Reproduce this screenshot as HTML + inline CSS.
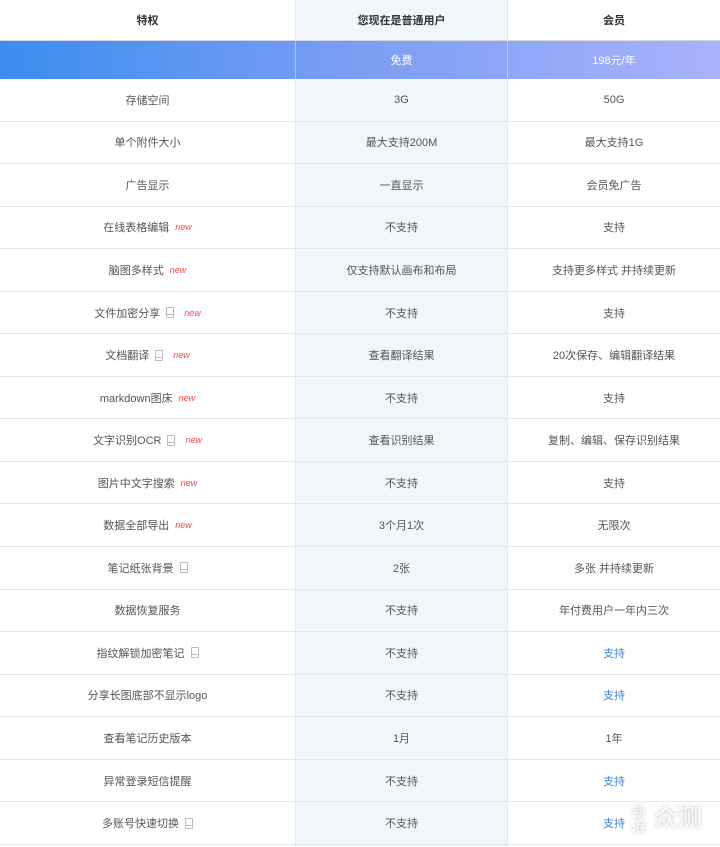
<!DOCTYPE html>
<html><head><meta charset="utf-8"><style>
*{margin:0;padding:0;box-sizing:border-box}
body{width:720px;height:847px;background:#fff;font-family:"Liberation Sans","Noto Sans CJK SC",sans-serif;font-size:11px;color:#555;position:relative;overflow:hidden}
.midbg{position:absolute;left:295px;top:0;width:213px;height:847px;background:#f1f6fb;border-left:1px solid #e3e6ea;border-right:1px solid #e3e6ea}
.row{position:absolute;left:0;width:720px;display:flex;align-items:center;border-bottom:1px solid #e6e6e6}
.c{display:flex;align-items:center;justify-content:center;height:100%}
.c1{width:295px}.c2{width:213px}.c3{width:212px}
.hd{font-weight:bold;color:#333}
.price{background:linear-gradient(90deg,#3b8def,#7c9ef3 50%,#a9b2fd);color:#fff;border-bottom:none}
.price .c2{border-left:1px solid rgba(255,255,255,.4);border-right:1px solid rgba(255,255,255,.4)}
.new{color:#f04848;font-style:italic;font-size:9px;margin-left:6px}
.ph{display:inline-block;width:8px;height:11px;border:1px solid #bbb;border-radius:1px;margin-left:6px;position:relative}
.ph:after{content:"";position:absolute;left:0;right:0;bottom:2px;border-top:1px solid #bbb}
.blue{color:#3d7fe0}
.wm{position:absolute;left:632px;top:798px;color:rgba(255,255,255,.85);font-size:24px;text-shadow:0 0 4px rgba(0,0,0,.3)}
</style></head><body>
<div class="midbg"></div>
<div class="row" style="top:0;height:41px;border-bottom:1px solid #d5d9de"><div class="c c1 hd">特权</div><div class="c c2 hd">您现在是普通用户</div><div class="c c3 hd">会员</div></div>
<div class="row price" style="top:41px;height:38px"><div class="c c1"></div><div class="c c2">免费</div><div class="c c3">198元/年</div></div>
<div class="row" style="top:79px;height:42.55px"><div class="c c1">存储空间</div><div class="c c2">3G</div><div class="c c3">50G</div></div>
<div class="row" style="top:121.55px;height:42.55px"><div class="c c1">单个附件大小</div><div class="c c2">最大支持200M</div><div class="c c3">最大支持1G</div></div>
<div class="row" style="top:164.1px;height:42.55px"><div class="c c1">广告显示</div><div class="c c2">一直显示</div><div class="c c3">会员免广告</div></div>
<div class="row" style="top:206.65px;height:42.55px"><div class="c c1">在线表格编辑<span class="new">new</span></div><div class="c c2">不支持</div><div class="c c3">支持</div></div>
<div class="row" style="top:249.2px;height:42.55px"><div class="c c1">脑图多样式<span class="new">new</span></div><div class="c c2">仅支持默认画布和布局</div><div class="c c3">支持更多样式 并持续更新</div></div>
<div class="row" style="top:291.75px;height:42.55px"><div class="c c1">文件加密分享<span class="ph"></span><span class="new" style="margin-left:10px">new</span></div><div class="c c2">不支持</div><div class="c c3">支持</div></div>
<div class="row" style="top:334.3px;height:42.55px"><div class="c c1">文档翻译<span class="ph"></span><span class="new" style="margin-left:10px">new</span></div><div class="c c2">查看翻译结果</div><div class="c c3">20次保存、编辑翻译结果</div></div>
<div class="row" style="top:376.85px;height:42.55px"><div class="c c1">markdown图床<span class="new">new</span></div><div class="c c2">不支持</div><div class="c c3">支持</div></div>
<div class="row" style="top:419.4px;height:42.55px"><div class="c c1">文字识别OCR<span class="ph"></span><span class="new" style="margin-left:10px">new</span></div><div class="c c2">查看识别结果</div><div class="c c3">复制、编辑、保存识别结果</div></div>
<div class="row" style="top:461.95px;height:42.55px"><div class="c c1">图片中文字搜索<span class="new">new</span></div><div class="c c2">不支持</div><div class="c c3">支持</div></div>
<div class="row" style="top:504.5px;height:42.55px"><div class="c c1">数据全部导出<span class="new">new</span></div><div class="c c2">3个月1次</div><div class="c c3">无限次</div></div>
<div class="row" style="top:547.05px;height:42.55px"><div class="c c1">笔记纸张背景<span class="ph"></span></div><div class="c c2">2张</div><div class="c c3">多张 并持续更新</div></div>
<div class="row" style="top:589.6px;height:42.55px"><div class="c c1">数据恢复服务</div><div class="c c2">不支持</div><div class="c c3">年付费用户一年内三次</div></div>
<div class="row" style="top:632.15px;height:42.55px"><div class="c c1">指纹解锁加密笔记<span class="ph"></span></div><div class="c c2">不支持</div><div class="c c3 blue">支持</div></div>
<div class="row" style="top:674.7px;height:42.55px"><div class="c c1">分享长图底部不显示logo</div><div class="c c2">不支持</div><div class="c c3 blue">支持</div></div>
<div class="row" style="top:717.25px;height:42.55px"><div class="c c1">查看笔记历史版本</div><div class="c c2">1月</div><div class="c c3">1年</div></div>
<div class="row" style="top:759.8px;height:42.55px"><div class="c c1">异常登录短信提醒</div><div class="c c2">不支持</div><div class="c c3 blue">支持</div></div>
<div class="row" style="top:802.35px;height:42.55px"><div class="c c1">多账号快速切换<span class="ph"></span></div><div class="c c2">不支持</div><div class="c c3 blue">支持</div></div>
<div class="wm"><span style="display:inline-block;font-size:14px;line-height:15px;vertical-align:middle;width:15px">新浪</span> 众测</div>
</body></html>
